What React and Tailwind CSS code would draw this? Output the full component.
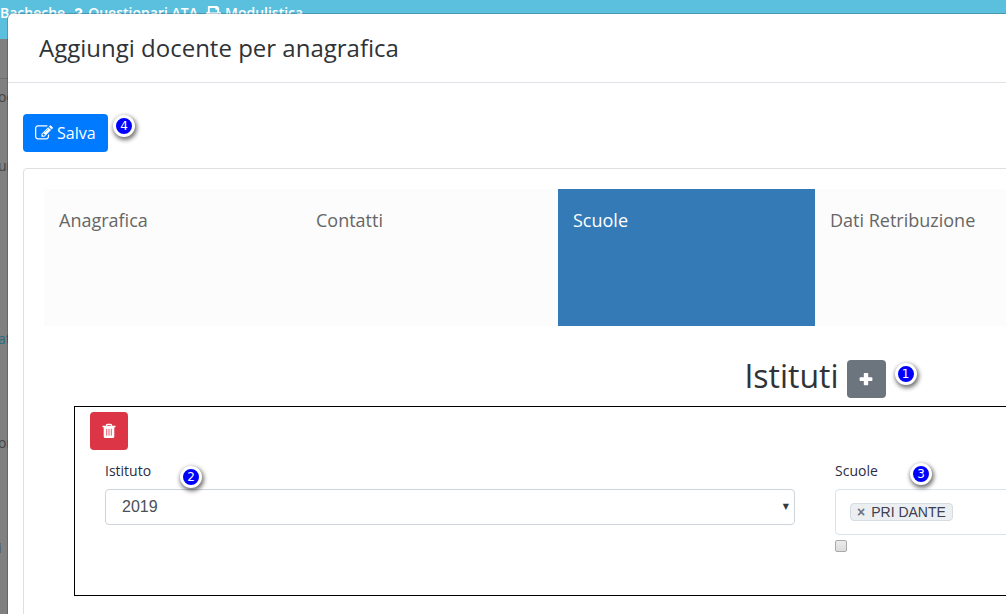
import { useState } from 'react';
import { FaPrint, FaQuestion } from 'react-icons/fa';

const tabs = ['Anagrafica', 'Contatti', 'Scuole', 'Dati Retribuzione'];

function EditIcon() {
  return (
    <svg width="18" height="18" viewBox="0 0 1792 1792" fill="currentColor" aria-hidden="true">
      <path d="M888 1184l116-116-152-152-116 116v56h96v96h56zm440-720q-16-16-33 1l-350 350q-17 17-1 33t33-1l350-350q17-17 1-33zm80 594v190q0 119-84.5 203.5t-203.5 84.5h-832q-119 0-203.5-84.5t-84.5-203.5v-832q0-119 84.5-203.5t203.5-84.5h832q63 0 117 25 15 7 18 23 3 17-9 29l-49 49q-14 14-32 8-23-6-45-6h-832q-66 0-113 47t-47 113v832q0 66 47 113t113 47h832q66 0 113-47t47-113v-126q0-13 9-22l64-64q15-15 35-7t20 29zm-96-738l288 288-672 672h-288v-288zm444 132l-92 92-288-288 92-92q28-28 68-28t68 28l152 152q28 28 28 68t-28 68z" />
    </svg>
  );
}

function PlusIcon() {
  return (
    <svg width="14" height="14" viewBox="0 0 14 14" fill="currentColor" aria-hidden="true">
      <path d="M5.5 1h3q.7 0 .7.7v3.6h3.4q.8 0 .8.8v2.2q0 .7-.8.7H9.2v3.4q0 .8-.7.8h-3q-.7 0-.7-.8V9H1.4q-.8 0-.8-.7V6.1q0-.8.8-.8h3.4V1.7q0-.7.7-.7z" />
    </svg>
  );
}

function TrashIcon() {
  return (
    <svg width="14" height="16" viewBox="0 0 14 16" fill="none" aria-hidden="true">
      <path d="M4.5 3V2.2q0-.9.9-.9h3.2q.9 0 .9.9V3" stroke="white" strokeWidth="1.3" />
      <path d="M.5 2.8h13v1.5H.5zM1.700 4.300h10.600v9.200q0 1.500-1.400 1.500H3.100q-1.400 0-1.400-1.500z" fill="white" />
      <path d="M4.7 5.8v6.800M7 5.8v6.800M9.3 5.8v6.800" stroke="#dc3545" strokeWidth=".8" />
    </svg>
  );
}

function Step({ n, className }) {
  return (
    <span className={`absolute flex size-[22px] items-center justify-center rounded-full border-[3px] border-white bg-[#0000ff] font-['DejaVu_Sans'] text-[12px] leading-none text-white shadow-[1px_2px_4px_1px_rgba(0,0,0,0.55)] ${className}`}>
      {n}
    </span>
  );
}

function Backdrop() {
  return (
    <div className="min-h-screen bg-[#808080] text-[14px] leading-[20px] text-[#454545]">
      <nav className="flex h-[39px] items-start gap-2 bg-[#5bc0de] pt-[3px] font-semibold text-white">
        <a href="#bacheche">Bacheche</a>
        <a href="#questionari" className="flex items-center gap-1"><FaQuestion size={11} />Questionari ATA</a>
        <a href="#modulistica" className="flex items-center gap-1"><FaPrint size={15} />Modulistica</a>
      </nav>
      <div className="h-10 border-b border-[#707070]" />
      <div className="-ml-[2px]">
        <div className="pt-2">oc</div>
        <div className="pt-[49px]">ur</div>
        <div className="pt-[153px] text-[#2b6a80]">at</div>
        <div className="pt-[84px]">or</div>
        <div className="pt-[85px]">i</div>
      </div>
    </div>
  );
}

export default function App() {
  const [activeTab, setActiveTab] = useState('Scuole');
  const [istituto, setIstituto] = useState('2019');
  const [scuole, setScuole] = useState(['PRI DANTE']);
  const [tutte, setTutte] = useState(false);

  return (
    <div className="relative h-screen overflow-hidden font-['Open_Sans',sans-serif]">
      <Backdrop />

      <div role="dialog" aria-labelledby="titolo" className="absolute top-[14px] left-2 min-h-full w-[1614px] rounded-[5px] bg-white text-[#212529] shadow-[0_0_0_1px_rgba(0,0,0,0.2)]">
        <header className="border-b border-[#dee2e6] px-[31px] pt-4 pb-4">
          <h1 id="titolo" className="text-[24px] leading-9 text-[#2f3337]">Aggiungi docente per anagrafica</h1>
        </header>

        <div className="px-[15px] pt-[31px]">
          <div className="relative flex">
            <button className="flex h-[38px] items-center gap-1 rounded bg-[#007bff] px-3 text-[16px] text-white">
              <EditIcon />Salva
            </button>
            <Step n={4} className="top-[1px] left-[90px]" />
          </div>

          <div className="mt-4 rounded border border-[#dfdfdf] px-5 pt-5 pb-10">
            <div role="tablist" className="grid grid-cols-6 bg-[#fcfcfc]">
              {tabs.map(t => (
                <button
                  key={t}
                  role="tab"
                  aria-selected={t === activeTab}
                  onClick={() => setActiveTab(t)}
                  className={`flex h-[137px] items-start px-[15px] pt-[17px] text-left text-[18px] leading-7 ${t === activeTab ? 'bg-[#337ab7] text-white' : 'text-[#666]'}`}
                >
                  {t}
                </button>
              ))}
            </div>

            <div className="mt-[34px] flex h-[46px] items-start justify-center gap-2">
              <h2 className="text-[32px] leading-8 text-[#2f3337]">Istituti</h2>
              <div className="relative">
                <button aria-label="Aggiungi istituto" className="flex h-[38px] w-[39px] items-center justify-center rounded bg-[#6c757d] text-white">
                  <PlusIcon />
                </button>
                <Step n={1} className="top-[3px] left-12" />
              </div>
            </div>

            <section className="mx-[30px] border border-black px-[15px] pt-[5px] pb-[43px]">
              <button aria-label="Elimina istituto" className="flex size-[38px] items-center justify-center rounded bg-[#dc3545] text-white">
                <TrashIcon />
              </button>
              <div className="grid grid-cols-2 gap-10 px-[15px] pt-[11px]">
                <div className="relative">
                  <label htmlFor="istituto" className="block text-[14px] leading-5 text-[#2b2d42]">Istituto</label>
                  <div className="relative mt-2">
                    <select
                      id="istituto"
                      value={istituto}
                      onChange={e => setIstituto(e.target.value)}
                      className="h-9 w-full appearance-none rounded border border-[#ced4da] bg-white px-4 font-['Liberation_Sans'] text-[16px] text-[#495057]"
                    >
                      <option value="2019">2019</option>
                    </select>
                    <span className="pointer-events-none absolute top-3 right-[6px] font-['DejaVu_Sans'] text-[8px] leading-3 text-[#343a40]">▼</span>
                  </div>
                  <Step n={2} className="top-[5px] left-[75px]" />
                </div>
                <div className="relative">
                  <label htmlFor="tutte" className="block text-[14px] leading-5 text-[#2b2d42]">Scuole</label>
                  <div className="mt-2 flex h-[46px] items-center rounded border border-[#dbe2e8] px-[14px]">
                    {scuole.map(s => (
                      <span key={s} className="flex h-[18px] items-center gap-[6px] rounded border border-[#d5dde2] bg-[#eceff1] px-[6px] font-['Liberation_Sans'] text-[14px] text-[#3b3f51]">
                        <button aria-label={`Rimuovi ${s}`} onClick={() => setScuole(scuole.filter(x => x !== s))} className="font-bold text-[#6c757d]">×</button>
                        {s}
                      </span>
                    ))}
                  </div>
                  <input
                    id="tutte"
                    type="checkbox"
                    checked={tutte}
                    onChange={e => setTutte(e.target.checked)}
                    className="mt-[5px] block size-3 appearance-none rounded-[2px] border border-[#a9a9a9] bg-linear-to-b from-[#ececec] to-[#dcdcdc] checked:bg-[#6c757d]"
                  />
                  <Step n={3} className="top-[2px] left-[75px]" />
                </div>
              </div>
            </section>
          </div>
        </div>
      </div>
    </div>
  );
}
